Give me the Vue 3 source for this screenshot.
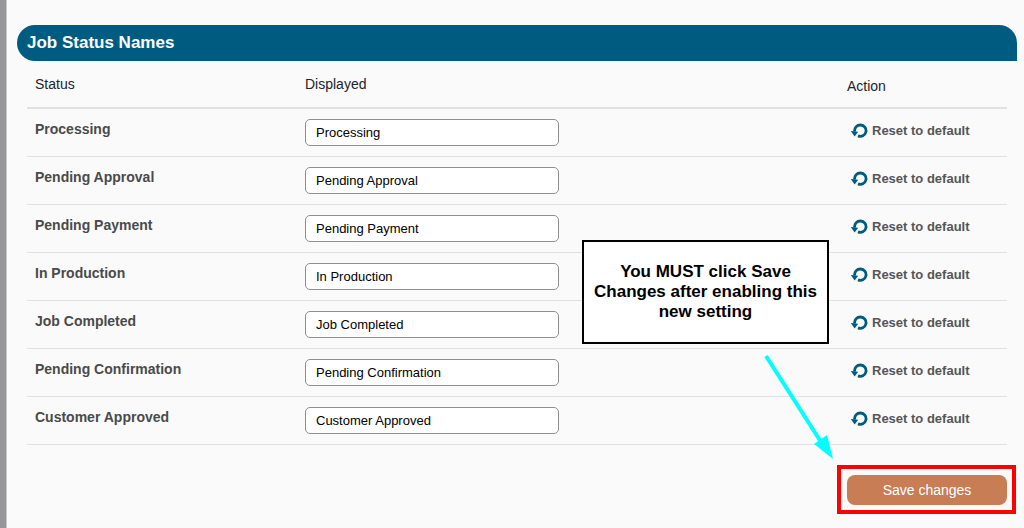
<script setup>
import { ref } from 'vue'

const names = [
  'Processing',
  'Pending Approval',
  'Pending Payment',
  'In Production',
  'Job Completed',
  'Pending Confirmation',
  'Customer Approved',
]
const statuses = ref(names.map((name, id) => ({ id, name, displayed: name })))

function reset(status) {
  status.displayed = status.name
}
</script>

<template>
  <main class="page">
    <h1 class="title">Job Status Names</h1>
    <form class="content" @submit.prevent>
      <table class="statuses">
        <thead>
          <tr>
            <th class="col-status" scope="col">Status</th>
            <th scope="col">Displayed</th>
            <th class="col-action" scope="col">Action</th>
          </tr>
        </thead>
        <tbody>
          <tr v-for="status in statuses" :key="status.id">
            <td><label class="name" :for="`status-${status.id}`">{{ status.name }}</label></td>
            <td><input :id="`status-${status.id}`" v-model="status.displayed" class="field" type="text" /></td>
            <td>
              <button class="reset" type="button" @click="reset(status)">
                <svg class="reset-icon" viewBox="0 0 18 18" aria-hidden="true">
                  <path d="M4.7 9.6A5.7 5.7 0 1 1 8 13.9" fill="none" stroke="#005b80" stroke-width="2.8" />
                  <path d="M0.8 9L8.2 9.7L4.6 14.6Z" fill="#005b80" />
                </svg>
                Reset to default
              </button>
            </td>
          </tr>
        </tbody>
      </table>
      <div class="actions">
        <div class="highlight">
          <button class="save" type="submit">Save changes</button>
        </div>
      </div>
    </form>
    <aside class="callout">
      <p class="note">You MUST click Save Changes after enabling this new setting</p>
      <svg class="arrow" viewBox="0 0 72 108" aria-hidden="true">
        <path d="M4 3L59 89" fill="none" stroke="#00ffff" stroke-width="4" />
        <path d="M52 91L65 82L71 106Z" fill="#00ffff" />
      </svg>
    </aside>
  </main>
</template>

<style>
body {
  margin: 0;
  background: #fafafa;
}
</style>

<style scoped>
.page {
  position: relative;
  box-sizing: border-box;
  min-height: 100vh;
  padding: 25px 7px 14px 11px;
  border-left: 6px solid #96969b;
  box-shadow: inset 1px 0 #c8c8c8;
  background: #fafafa;
  color: #212529;
  font: 14px/20px "Liberation Sans", Arial, sans-serif;
}
.title {
  margin: 0;
  padding: 8px 10px;
  border-radius: 18px 18px 0 18px;
  background: #005b80;
  color: #fff;
  font-size: 17px;
  font-weight: bold;
  line-height: 20px;
}
.content {
  padding: 0 10px;
}
.statuses {
  width: 100%;
  table-layout: fixed;
  border-collapse: separate;
  border-spacing: 0;
}
th {
  padding: 13px 8px;
  border-bottom: 2px solid #dee2e6;
  font-weight: normal;
  text-align: left;
  vertical-align: top;
}
.col-status {
  width: 254px;
}
.col-action {
  width: 152px;
  padding-top: 15px;
  padding-bottom: 11px;
}
td {
  height: 27px;
  padding: 10px 8px;
  border-bottom: 1px solid #dfe2e5;
  vertical-align: top;
}
.name {
  display: block;
  color: #4a4a4a;
  font-weight: bold;
}
.field {
  display: block;
  box-sizing: border-box;
  width: 254px;
  height: 27px;
  padding: 0 10px;
  border: 1px solid #8f8f8f;
  border-radius: 5px;
  background: #fff;
  color: #000;
  font: 13px "Liberation Sans", Arial, sans-serif;
}
.reset {
  display: flex;
  align-items: center;
  gap: 4px;
  margin: 0;
  padding: 3px 3px 2px;
  border: 0;
  background: none;
  color: #555;
  font: bold 13px/18px "Liberation Sans", Arial, sans-serif;
  white-space: nowrap;
  cursor: pointer;
}
.reset-icon {
  width: 18px;
  height: 18px;
}
.actions {
  display: flex;
  justify-content: flex-end;
  margin-top: 20px;
  margin-right: -9px;
}
.highlight {
  padding: 6px 5px 5px 6px;
  border: 4px solid #f00;
}
.save {
  display: block;
  width: 160px;
  height: 30px;
  padding: 0;
  border: 0;
  border-radius: 8px;
  background: #c87d55;
  color: #fff;
  font: 14px "Liberation Sans", Arial, sans-serif;
  cursor: pointer;
}
.callout {
  position: absolute;
  top: 240px;
  right: 190px;
  display: flex;
  flex-direction: column;
  align-items: flex-end;
  gap: 9px;
}
.note {
  box-sizing: border-box;
  width: 247px;
  margin: 0 5px 0 0;
  padding: 20px 8px;
  border: 2px solid #000;
  background: #fff;
  color: #000;
  font-size: 17px;
  font-weight: bold;
  line-height: 20px;
  text-align: center;
}
.arrow {
  width: 72px;
  height: 108px;
}
</style>
